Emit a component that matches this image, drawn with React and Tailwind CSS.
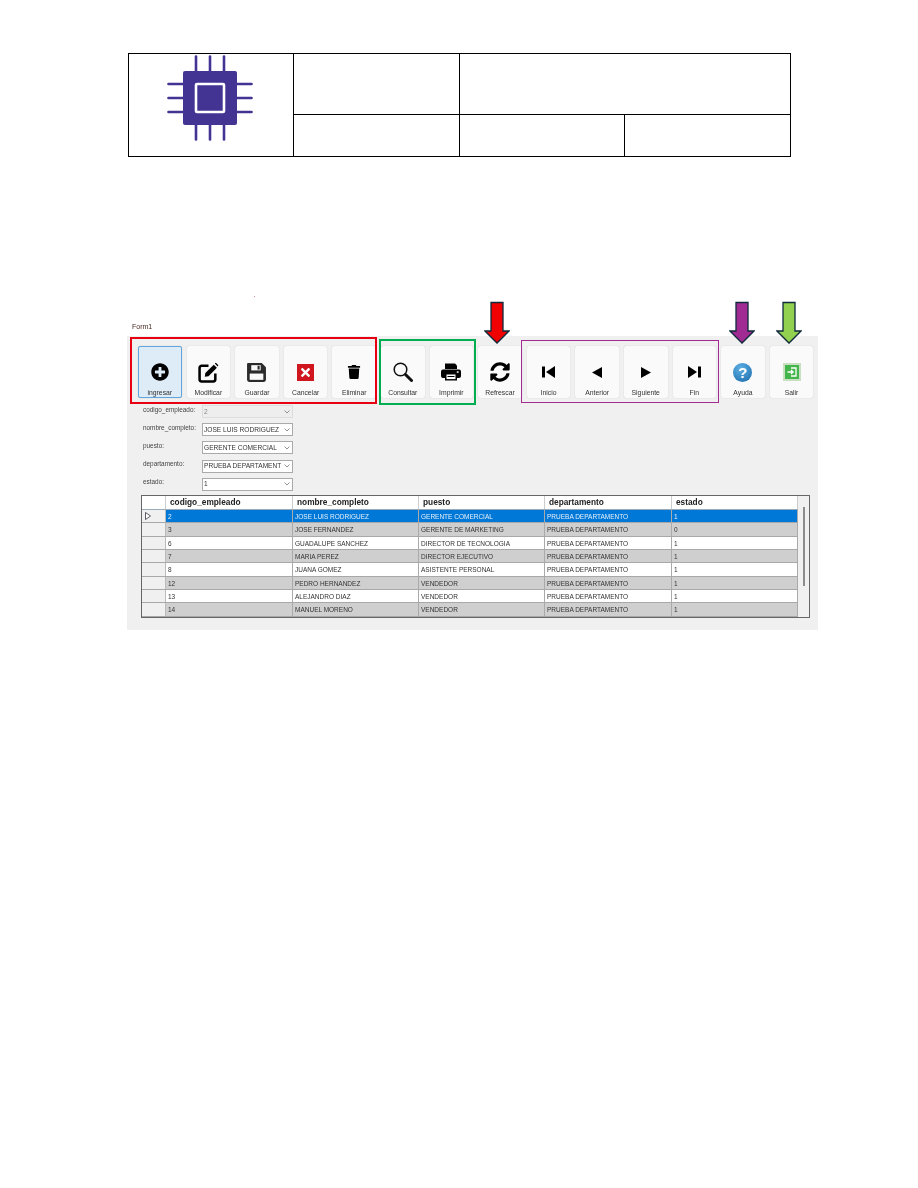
import React from "react";
import { FaPlusCircle, FaSyncAlt, FaTrash, FaTimes } from "react-icons/fa";

function Chip() {
  const p = [0, 14, 28];
  return (
    <svg width="86" height="86" viewBox="0 0 86 86" fill="none">
      {p.map((d) => (
        <g key={d} stroke="#433393" strokeWidth="2.6" strokeLinecap="round">
          <line x1={29 + d} y1="1.5" x2={29 + d} y2="84.5" />
          <line y1={29 + d} x1="1.5" y2={29 + d} x2="84.5" />
        </g>
      ))}
      <rect x="16" y="16" width="54" height="54" rx="2" fill="#433393" />
      <rect x="29" y="29" width="28" height="28" rx="1" fill="#433393" stroke="#fff" strokeWidth="2.6" />
    </svg>
  );
}

function Arrow({ color, left, top = 301 }) {
  return (
    <svg className="absolute" style={{ left, top }} width="26" height="43" viewBox="0 0 26 43">
      <path d="M7 1.5H19V30H25L13 42L1 30H7Z" fill={color} stroke="#0f2a3a" strokeWidth="1.3" />
    </svg>
  );
}

const Magnifier = () => (
  <svg width="20" height="20" viewBox="0 0 20 20" fill="none" stroke="#111">
    <circle cx="7.5" cy="7.5" r="6.3" strokeWidth="1.5" />
    <line x1="12.5" y1="12.5" x2="18.5" y2="18.5" strokeWidth="3" strokeLinecap="round" />
  </svg>
);
const Edit = () => (
  <svg width="21" height="21" viewBox="0 0 20 20" fill="none">
    <path d="M10 3.5H3.5A2 2 0 0 0 1.5 5.5V16.5A2 2 0 0 0 3.5 18.5H14.5A2 2 0 0 0 16.5 16.5V11" stroke="#000" strokeWidth="2.4" />
    <path d="M7 10.5L15 2.5L18 5.5L10 13.5L6.5 14Z" fill="#000" />
    <path d="M16 1.5L17 0.7L19.4 3.1L18.7 4.2Z" fill="#000" />
  </svg>
);
const Save = () => (
  <svg width="21" height="21" viewBox="0 0 20 20">
    <path d="M2 1H15L19 5V17A2 2 0 0 1 17 19H3A2 2 0 0 1 1 17V2A1 1 0 0 1 2 1Z" fill="#2b2b2b" />
    <rect x="5" y="3" width="9" height="5" fill="#fafafa" />
    <rect x="11" y="3.6" width="2" height="3.6" fill="#2b2b2b" />
    <rect x="3.5" y="11" width="13" height="6" fill="#fafafa" />
  </svg>
);
const Print = () => (
  <svg width="20" height="18" viewBox="0 0 20 18">
    <path d="M4 0.5H14L16 2.5V6H4Z" fill="#000" />
    <rect x="0" y="6.5" width="20" height="8.5" rx="2" fill="#000" />
    <rect x="4" y="11" width="12" height="6.5" fill="#000" />
    <rect x="5.5" y="11.5" width="9" height="4.6" fill="#fafafa" />
    <rect x="6.5" y="13" width="7" height="1" fill="#000" />
    <rect x="15.8" y="8.3" width="1.8" height="1.5" fill="#fafafa" />
  </svg>
);
const First = () => (
  <svg width="13" height="12" viewBox="0 0 13 12"><rect x="0" y="0.5" width="3" height="11" fill="#000" /><path d="M13 0V12L4 6Z" fill="#000" /></svg>
);
const Last = () => (
  <svg width="13" height="12" viewBox="0 0 13 12"><rect x="10" y="0.5" width="3" height="11" fill="#000" /><path d="M0 0V12L9 6Z" fill="#000" /></svg>
);
const Prev = () => (
  <svg width="10" height="11" viewBox="0 0 10 11"><path d="M10 0V11L0 5.5Z" fill="#000" /></svg>
);
const Next = () => (
  <svg width="10" height="11" viewBox="0 0 10 11"><path d="M0 0V11L10 5.5Z" fill="#000" /></svg>
);
const Cancel = () => (
  <div className="w-[17px] h-[17px] bg-[#d0161f] flex items-center justify-center">
    <FaTimes className="text-white text-[13px]" />
  </div>
);
const Help = () => (
  <div className="w-[19px] h-[19px] rounded-full bg-[radial-gradient(circle_at_40%_30%,#5fb0e6,#1668a8)] flex items-center justify-center text-white font-bold text-[15px] leading-none">
    ?
  </div>
);
const Exit = () => (
  <svg width="18" height="18" viewBox="0 0 18 18">
    <rect width="18" height="18" fill="#c8dfc4" />
    <rect x="2" y="2" width="14" height="14" fill="#43b54a" />
    <path d="M8 5H13V13H8" fill="none" stroke="#fff" strokeWidth="1.3" />
    <path d="M4.5 9H10M8 7L10.2 9L8 11" fill="none" stroke="#fff" strokeWidth="1.3" />
  </svg>
);

function Btn({ icon, label, active }) {
  return (
    <div
      className={
        "w-[43.6px] h-[52px] shrink-0 rounded-[2px] flex flex-col items-center shadow-[0_0_1px_#bbb] " +
        (active ? "bg-[#deecf8] outline outline-1 -outline-offset-1 outline-[#62a5dc]" : "bg-[#fafafa]")
      }
    >
      <div className="h-[42px] w-full flex items-center justify-center pt-[10px] shrink-0">{icon}</div>
      <div className="text-[6.8px] leading-[10px] text-[#333] whitespace-nowrap">{label}</div>
    </div>
  );
}

function Field({ label, value, disabled }) {
  return (
    <div className="flex items-center h-[13px]">
      <div className="w-[59px] text-[6.4px] text-[#444] -mt-[4px] whitespace-nowrap">{label}</div>
      <div
        className={
          "w-[91px] h-[13px] flex items-center justify-between pl-[1px] pr-[2px] border text-[6.6px] " +
          (disabled ? "bg-[#eeeeee] border-[#ddd] text-[#888]" : "bg-white border-[#aaa] text-[#333]")
        }
      >
        <span className="whitespace-nowrap overflow-hidden">{value}</span>
        <svg width="6" height="4" viewBox="0 0 6 4" className="shrink-0 ml-[2px]">
          <path d="M0.5 0.5L3 3L5.5 0.5" fill="none" stroke="#777" strokeWidth="0.8" />
        </svg>
      </div>
    </div>
  );
}

const rows = [
  ["2", "JOSE LUIS RODRIGUEZ", "GERENTE COMERCIAL", "1"],
  ["3", "JOSE FERNANDEZ", "GERENTE DE MARKETING", "0"],
  ["6", "GUADALUPE SANCHEZ", "DIRECTOR DE TECNOLOGIA", "1"],
  ["7", "MARIA PEREZ", "DIRECTOR EJECUTIVO", "1"],
  ["8", "JUANA GOMEZ", "ASISTENTE PERSONAL", "1"],
  ["12", "PEDRO HERNANDEZ", "VENDEDOR", "1"],
  ["13", "ALEJANDRO DIAZ", "VENDEDOR", "1"],
  ["14", "MANUEL MORENO", "VENDEDOR", "1"],
];
const cols = "grid grid-cols-[24px_127px_126px_126px_127px_126px]";

export default function App() {
  return (
    <div className="relative w-[918px] h-[1188px] bg-white overflow-hidden font-['Liberation_Sans',Arial,sans-serif]">
      <div className="pt-[53px] pl-[128px]">
        <div className="w-[663px] h-[104px] border border-black grid grid-cols-[165px_166px_165px_1fr] grid-rows-[61px_1fr]">
          <div className="row-span-2 border-r border-black flex justify-center pr-[2px] pt-[1px]">
            <Chip />
          </div>
          <div className="border-r border-b border-black" />
          <div className="col-span-2 border-b border-black" />
          <div className="border-r border-black" />
          <div className="border-r border-black" />
          <div />
        </div>
      </div>

      <div className="pl-[132px] mt-[165px] h-[9px] text-[7px] leading-[9px] text-[#4a2a20] blur-[0.3px]">Form1</div>

      <div className="ml-[127px] mt-[5px] w-[691px] h-[294px] bg-[#f0f0f0] pt-[10px] blur-[0.35px]">
        <div className="flex pl-[11px] gap-[5px]">
          <Btn active icon={<FaPlusCircle className="text-black text-[18px]" />} label="ingresar" />
          <Btn icon={<Edit />} label="Modificar" />
          <Btn icon={<Save />} label="Guardar" />
          <Btn icon={<Cancel />} label="Cancelar" />
          <Btn icon={<FaTrash className="text-black text-[14px]" />} label="Eliminar" />
          <Btn icon={<Magnifier />} label="Consultar" />
          <Btn icon={<Print />} label="Imprimir" />
          <Btn icon={<FaSyncAlt className="text-black text-[20px]" />} label="Refrescar" />
          <Btn icon={<First />} label="Inicio" />
          <Btn icon={<Prev />} label="Anterior" />
          <Btn icon={<Next />} label="Siguiente" />
          <Btn icon={<Last />} label="Fin" />
          <Btn icon={<Help />} label="Ayuda" />
          <Btn icon={<Exit />} label="Salir" />
        </div>

        <div className="ml-[16px] mt-[7px] flex flex-col gap-[5.2px]">
          <Field label="codigo_empleado:" value="2" disabled />
          <Field label="nombre_completo:" value="JOSE LUIS RODRIGUEZ" />
          <Field label="puesto:" value="GERENTE COMERCIAL" />
          <Field label="departamento:" value="PRUEBA DEPARTAMENT" />
          <Field label="estado:" value="1" />
        </div>

        <div className="ml-[14px] mt-[4px] w-[669px] h-[123px] border border-[#666] bg-[#f0f0f0] flex">
          <div className="w-[656px]">
            <div className={cols + " h-[14px] bg-white border-b border-[#9ab] text-[8.3px] font-bold text-[#222] leading-[13px]"}>
              <div className="border-r border-[#ccc]" />
              {["codigo_empleado", "nombre_completo", "puesto", "departamento", "estado"].map((h) => (
                <div key={h} className="pl-[4px] border-r border-[#ccc]">{h}</div>
              ))}
            </div>
            {rows.map((r, i) => {
              const sel = i === 0;
              const bg = sel ? "bg-[#0078d7] text-[#e6f0fa]" : i % 2 === 1 ? "bg-[#cfcfcf] text-[#333]" : "bg-white text-[#333]";
              const cells = [r[0], r[1], r[2], "PRUEBA DEPARTAMENTO", r[3]];
              return (
                <div key={r[0]} className={cols + " h-[13.4px] text-[6.5px] leading-[14px] border-b border-[#a8a8a8]"}>
                  <div className="bg-[#f0f0f0] border-r border-[#bbb] flex items-center pl-[3px]">
                    {sel && (
                      <svg width="6" height="8" viewBox="0 0 6 8">
                        <path d="M0.5 0.5V7.5L5.5 4Z" fill="#fff" stroke="#334" strokeWidth="0.8" />
                      </svg>
                    )}
                  </div>
                  {cells.map((c, j) => (
                    <div key={j} className={bg + " pl-[2px] border-r border-[#aaa] whitespace-nowrap overflow-hidden"}>{c}</div>
                  ))}
                </div>
              );
            })}
          </div>
          <div className="flex-1 flex justify-center pt-[11px]">
            <div className="w-[2px] h-[79px] bg-[#8c8c8c]" />
          </div>
        </div>
      </div>

      <div className="absolute left-[130px] top-[337px] w-[247px] h-[67px] border-2 border-[#e60012]" />
      <div className="absolute left-[379px] top-[339px] w-[97px] h-[66px] border-2 border-[#00ad50]" />
      <div className="absolute left-[521px] top-[340px] w-[198px] h-[63px] border-[1.5px] border-[#a02b93]" />
      <Arrow color="#f00000" left={484} />
      <Arrow color="#a02b93" left={729} />
      <Arrow color="#92d050" left={776} />
      <div className="absolute left-[254px] top-[296px] w-[1px] h-[1px] bg-[#d88]" />
    </div>
  );
}
